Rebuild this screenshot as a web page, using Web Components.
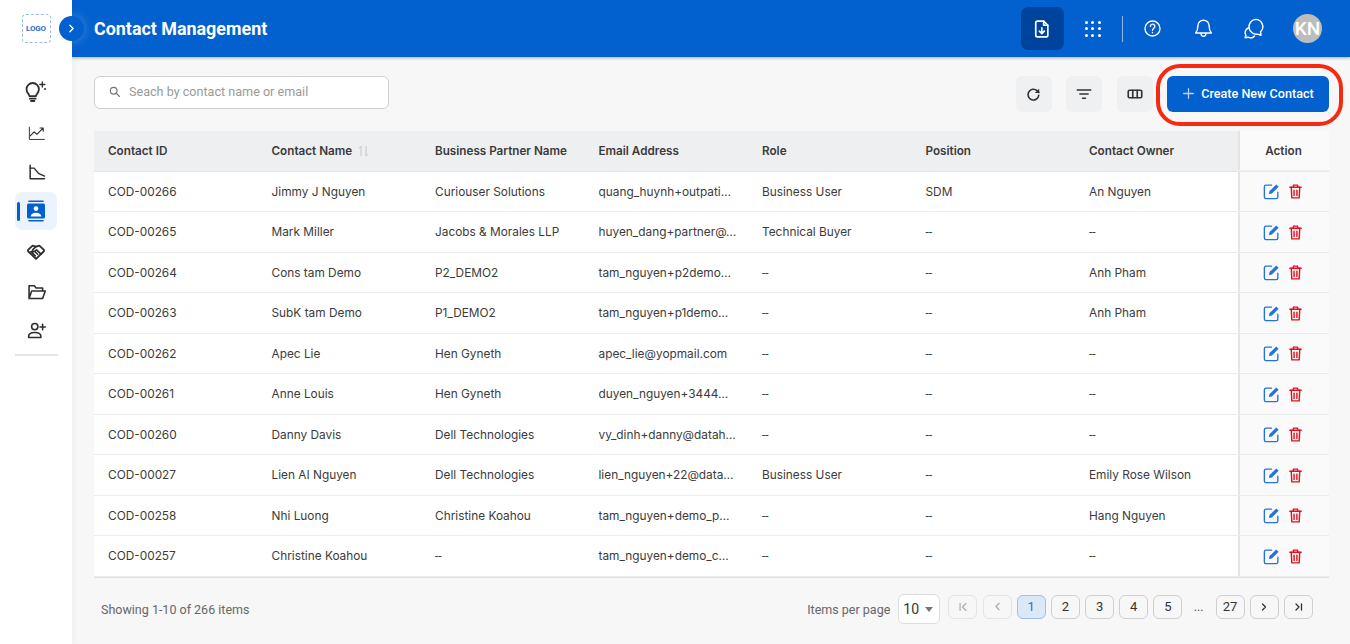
<!DOCTYPE html>
<html lang="en"><head><meta charset="utf-8"><title>Contact Management</title>
<style>
html,body{margin:0;padding:0;height:100%;background:#f7f7f7;overflow:hidden}
body{font-family:"Inter","Liberation Sans",sans-serif}
</style></head><body>
<app-shell></app-shell>
<script>
const I={
 bulb:'<path d="M5.5 17.2c0-1.8-3-3.3-3-7a6.2 6.2 0 0 1 12.4 0c0 3.7-3 5.2-3 7z"/><path d="M5.8 19.7h5.8M7 22h3.4"/><path d="M18.3 3v5M15.8 5.5h5" stroke-width="1.3"/><circle cx="21" cy="10" r="1" fill="currentColor" stroke="none"/>',
 trend:'<path d="M3 4v15.5h19" stroke-width="1.2"/><path d="M4 15l5-5 3.5 3 7.5-7.5M16.5 5h4v4" stroke-width="1.4"/>',
 chart:'<path d="M4 3v17h18" stroke-width="1.9"/><path d="M4 6.5h5l5.5 6.5 7.5 3.5" stroke-width="1.7"/>',
 deal:'<path d="M12 21.5 2.8 12.6a1.6 1.6 0 0 1 0-2.3L8 5.5l4 1.2 4-1.2 5.2 4.8a1.6 1.6 0 0 1 0 2.3z" stroke-width="2.2"/><path d="M12 6.7 8.2 10.4a1.5 1.5 0 0 0 2.1 2.1l2.4-1.9 5.3 5.1M8 14.8l3 3M10.6 12.6l3.4 3.3M6 12.8l3.5 3.5" stroke-width="2"/>',
 folder:'<path d="M3.5 20V5.5h6l2 2.5h7.5v3.5M3.5 20h15.5l3-8.5H6.5z" stroke-width="1.8"/>',
 addUser:'<circle cx="10" cy="7.5" r="3.6" stroke-width="1.8"/><path d="M3 20v-1.5c0-2.7 3-4.3 7-4.3s7 1.6 7 4.3V20z" stroke-width="1.8"/><path d="M19 5v6M16 8h6" stroke-width="1.8"/>',
 search:'<circle cx="10.5" cy="10.5" r="6.2" stroke-width="2.2"/><path d="m15 15 6 6" stroke-width="2.6"/>',
 refresh:'<path d="M19.4 13.2A7.6 7.6 0 1 1 17 6.6l2.6 2.4" stroke-width="2.3"/><path d="M20 3.8V10h-6.2z" fill="currentColor" stroke="none"/>',
 filter:'<path d="M3 6.5h18M6.5 12h11M10 17.5h4" stroke-width="2"/>',
 cols:'<rect x="3" y="7" width="18" height="10" rx="1.6" stroke-width="2.2"/><path d="M9 7v10M15 7v10" stroke-width="2.2"/>',
 fileDown:'<path d="M6.5 2.5H14l5 5v12a2 2 0 0 1-2 2H6.5a2 2 0 0 1-2-2v-15a2 2 0 0 1 2-2z" stroke-width="2"/><path d="M14 2.5v5h5" stroke-width="2"/><path d="M11.8 10.5v7M8.8 14.6l3 3 3-3" stroke-width="2"/>',
 help:'<circle cx="12" cy="12" r="9.5" stroke-width="1.7"/><path d="M9.3 9.4a2.8 2.8 0 1 1 4.3 2.3c-1 .7-1.6 1.2-1.6 2.5" stroke-width="1.7"/><circle cx="12" cy="17.2" r="1" fill="currentColor" stroke="none"/>',
 bell:'<path d="M12 2.5a6.4 6.4 0 0 0-6.4 6.4c0 5.2-1.1 6.6-2.6 8.3h18c-1.5-1.7-2.6-3.1-2.6-8.3A6.4 6.4 0 0 0 12 2.5z" stroke-width="1.6"/><path d="M9.3 17.4a2.8 2.8 0 1 0 5.4 0" stroke-width="1.6"/>',
 chat:'<path d="M14 2.5a7.6 7.6 0 0 1 5.4 13l.4 3.6-3.6-1.2a7.6 7.6 0 1 1-2.2-15.4z" stroke-width="1.5"/><path d="M6.6 11.5a5.2 5.2 0 0 0-2.5 7.6l-.8 2.5 3-.5c2.4 1.2 5 .8 6.7-1.3" stroke-width="1.5"/>',
 edit:'<path d="M20 13v6a2 2 0 0 1-2 2H5a2 2 0 0 1-2-2V6a2 2 0 0 1 2-2h7" stroke-width="1.7"/><path d="M9.5 11.5 18 3l3 3-8.5 8.5-3.8.8z" fill="currentColor" stroke="none"/>',
 trash:'<path d="M4 6h16M9 6V3h6v3" stroke-width="2"/><path d="M6 6l.8 15h10.4L18 6" stroke-width="2"/><path d="M10 10v7.5M14 10v7.5" stroke-width="2"/>',
 first:'<path d="M7 6v12" stroke-width="2"/><path d="m17 6-6 6 6 6" stroke-width="2"/>',
 prev:'<path d="m15 6-6 6 6 6" stroke-width="2"/>',
 next:'<path d="m9 6 6 6-6 6" stroke-width="2.6"/>',
 last:'<path d="m6 6 6 6-6 6" stroke-width="2.6"/><path d="M17 6v12" stroke-width="2.6"/>'
};
class UiIcon extends HTMLElement{
 connectedCallback(){
  const s=this.getAttribute('size')||20,n=this.getAttribute('name');
  this.attachShadow({mode:'open'}).innerHTML=`<style>:host{display:inline-flex;width:${s}px;height:${s}px;flex:none}svg{width:100%;height:100%;display:block}</style><svg viewBox="0 0 24 24" fill="none" stroke="currentColor" stroke-width="1.8" stroke-linecap="round" stroke-linejoin="round" aria-hidden="true">${I[n]||''}</svg>`;
 }
}
customElements.define('ui-icon',UiIcon);

class SideNav extends HTMLElement{
 connectedCallback(){
  const item=(n,s,h)=>`<div class="item" style="height:${h}px"><ui-icon name="${n}" size="${s}"></ui-icon></div>`;
  this.attachShadow({mode:'open'}).innerHTML=`<style>
  :host{display:flex;flex-direction:column;align-items:center;width:72px;flex:none;background:#fff;box-shadow:0 0 8px rgba(0,0,0,.06);position:relative;z-index:2;height:644px;box-sizing:border-box;padding-top:14px}
  .logo{width:27px;height:27px;border:1px dashed #9db9ef;border-radius:4px;display:flex;align-items:center;justify-content:center;color:#2f69c9;font:700 8px "Roboto",sans-serif;letter-spacing:-.2px}
  nav{margin-top:28px;display:flex;flex-direction:column;width:42px;align-items:center}
  .item{width:42px;display:flex;align-items:center;justify-content:center;color:#2e2e2e;position:relative;box-sizing:border-box}
  .active{background:#edf3fc;border-radius:7px;color:#0360cf;height:38px;margin-top:3px;width:42px}
  .active::before{content:"";position:absolute;left:2px;top:10px;width:3px;height:19px;border-radius:2px;background:#0360cf}
  .rule{width:43px;height:2px;background:#e6e6e6;margin-top:4px}
  .toggle{position:absolute;left:58.5px;top:15.5px;width:25px;height:25px;border-radius:50%;background:#0360cf;color:#fff;display:flex;align-items:center;justify-content:center;box-shadow:0 0 12px rgba(255,255,255,.25)}
  </style>
  <div class="logo">LOGO</div>
  <span class="toggle"><ui-icon name="next" size="13"></ui-icon></span>
  <nav>
   ${item('bulb',24,40)}${item('trend',19,44)}${item('chart',19,34)}
   <div class="item active"><svg width="22" height="24" viewBox="0 0 22 24" aria-hidden="true"><path d="M4 2.2h14M4 21.8h14" stroke="currentColor" stroke-width="1.6" stroke-linecap="round"/><rect x="2" y="4.5" width="18" height="15" rx="1.6" fill="currentColor"/><circle cx="11" cy="9.6" r="2.3" fill="#fff"/><path d="M5.8 17.4c0-2.4 2.3-3.7 5.2-3.7s5.2 1.3 5.2 3.7z" fill="#fff"/></svg></div>
   ${item('deal',20,42)}${item('folder',21,38)}${item('addUser',21,40)}
  </nav>
  <div class="rule"></div>`;
 }
}
customElements.define('side-nav',SideNav);

class TopBar extends HTMLElement{
 connectedCallback(){
  this.attachShadow({mode:'open'}).innerHTML=`<style>
  :host{display:flex;align-items:center;height:57px;flex:none;background:#0360cf;color:#fff;box-shadow:0 1px 3px rgba(0,0,0,.3);padding:0 28px 0 22px;box-sizing:border-box;position:relative;z-index:1}
  h1{font:700 17.9px "Roboto",sans-serif;margin:0;flex:1}
  .dl{width:43px;height:43px;border-radius:7px;background:#00439c;display:flex;align-items:center;justify-content:center}
  .dots{width:16px;height:16px;margin-left:21px;display:grid;grid-template-columns:repeat(3,3px);grid-auto-rows:3px;gap:3.5px}
  .dots i{background:#fff;border-radius:50%}
  .sep{width:1px;height:26px;background:rgba(255,255,255,.55);margin:0 20px 0 21px}
  .ic{display:flex}
  .av{width:29px;height:29px;border-radius:50%;background:#bdbdbd;color:#fff;font:500 19px "Roboto",sans-serif;display:flex;align-items:center;justify-content:center;margin-left:28.5px}
  </style>
  <h1>Contact Management</h1>
  <div class="dl"><ui-icon name="fileDown" size="20"></ui-icon></div>
  <div class="dots">${'<i></i>'.repeat(9)}</div>
  <div class="sep"></div>
  <span class="ic"><ui-icon name="help" size="19"></ui-icon></span>
  <span class="ic" style="margin-left:31px"><ui-icon name="bell" size="21"></ui-icon></span>
  <span class="ic" style="margin-left:28px"><ui-icon name="chat" size="23"></ui-icon></span>
  <div class="av">KN</div>`;
 }
}
customElements.define('top-bar',TopBar);

class ToolBar extends HTMLElement{
 connectedCallback(){
  this.attachShadow({mode:'open'}).innerHTML=`<style>
  :host{display:flex;align-items:flex-start;height:36px;position:relative;flex:none}
  .search{width:295px;height:33px;box-sizing:border-box;background:#fff;border:1px solid #cfcfcf;border-radius:6px;display:flex;align-items:center;padding:0 0 2px 13px;gap:8px;color:#777;font:12.6px "Roboto",sans-serif}
  .search span{color:#9a9a9a}
  .sp{flex:1}
  .b{width:36px;height:36px;border-radius:6px;background:#eff0f2;color:#333;display:flex;align-items:center;justify-content:center;margin-right:14.5px}
  .cta{width:162px;height:36px;border-radius:6px;background:#0360cf;color:#fff;font:500 12.6px "Roboto",sans-serif;display:flex;align-items:center;justify-content:center;gap:7px;box-sizing:border-box;margin-left:-.5px;margin-right:.5px;padding:0 0 1px 2px}
  .cta svg{display:block}
  .ring{position:absolute;right:-13.5px;top:-12.5px;width:186.5px;height:62px;box-sizing:border-box;border:4.5px solid #f52a12;border-radius:24px;pointer-events:none}
  </style>
  <div class="search"><ui-icon name="search" size="13"></ui-icon><span>Seach by contact name or email</span></div>
  <div class="sp"></div>
  <div class="b"><ui-icon name="refresh" size="17"></ui-icon></div>
  <div class="b"><ui-icon name="filter" size="18"></ui-icon></div>
  <div class="b"><ui-icon name="cols" size="18"></ui-icon></div>
  <div class="cta"><svg width="11" height="11" viewBox="0 0 11 11"><path d="M5.5 .7v9.6M.7 5.5h9.6" stroke="#b9d3f3" stroke-width="1.3" stroke-linecap="round"/></svg><span>Create New Contact</span></div>
  <div class="ring"></div>`;
 }
}
customElements.define('tool-bar',ToolBar);

const COLS='repeat(7,163.5px) 1fr';
class TableRow extends HTMLElement{
 connectedCallback(){
  const cells=JSON.parse(this.getAttribute('cells'));
  this.attachShadow({mode:'open'}).innerHTML=`<style>
  :host{display:grid;grid-template-columns:${COLS};height:40.5px;box-sizing:border-box;border-bottom:1px solid #ececec;background:#fff;font:11.85px "Inter",sans-serif;color:#3b3b3b}
  div{padding-left:14px;display:flex;align-items:center;white-space:nowrap;overflow:hidden}
  .dash{font-family:"Roboto",sans-serif;font-size:12px}
  .a{background:#fafafa;border-left:2px solid #e4e4e4;padding:0 3px 0 0;justify-content:center;gap:6px;margin-left:-.5px}
  .e{color:#2273dc}.t{color:#e0101e}
  </style>${cells.map(c=>`<div${c==='--'?' class="dash"':''}>${c}</div>`).join('')}<div class="a"><ui-icon class="e" name="edit" size="19"></ui-icon><ui-icon class="t" name="trash" size="17"></ui-icon></div>`;
 }
}
customElements.define('table-row',TableRow);

class TableHead extends HTMLElement{
 connectedCallback(){
  const h=['Contact ID','Contact Name','Business Partner Name','Email Address','Role','Position','Contact Owner'];
  this.attachShadow({mode:'open'}).innerHTML=`<style>
  :host{display:grid;grid-template-columns:${COLS};height:40.95px;background:#eeeff1;font:600 11.7px "Inter",sans-serif;color:#3a3a3a;box-sizing:border-box;border-bottom:1px solid #e6e6e6;padding-bottom:.5px}
  div{padding-left:14px;display:flex;align-items:center;white-space:nowrap;gap:6px}
  .a{background:#fafafa;border-left:2px solid #e4e4e4;padding:0 2px 0 0;justify-content:center;margin-left:-.5px}
  svg{display:block}
  </style>${h.map((t,i)=>`<div>${t}${i==1?'<svg width="11" height="12" viewBox="0 0 11 12" fill="none" stroke="#c4c6c9" stroke-width="1"><path d="M3 11V1.2L1 3.2"/><path d="M8 1v9.8l2-2"/></svg>':''}</div>`).join('')}<div class="a">Action</div>`;
 }
}
customElements.define('table-head',TableHead);

class DataTable extends HTMLElement{
 connectedCallback(){
  const d=[
  ['COD-00266','Jimmy J Nguyen','Curiouser Solutions','quang_huynh+outpati…','Business User','SDM','An Nguyen'],
  ['COD-00265','Mark Miller','Jacobs &amp; Morales LLP','huyen_dang+partner@…','Technical Buyer','--','--'],
  ['COD-00264','Cons tam Demo','P2_DEMO2','tam_nguyen+p2demo…','--','--','Anh Pham'],
  ['COD-00263','SubK tam Demo','P1_DEMO2','tam_nguyen+p1demo…','--','--','Anh Pham'],
  ['COD-00262','Apec Lie','Hen Gyneth','apec_lie@yopmail.com','--','--','--'],
  ['COD-00261','Anne Louis','Hen Gyneth','duyen_nguyen+3444…','--','--','--'],
  ['COD-00260','Danny Davis','Dell Technologies','vy_dinh+danny@datah…','--','--','--'],
  ['COD-00027','Lien AI Nguyen','Dell Technologies','lien_nguyen+22@data…','Business User','--','Emily Rose Wilson'],
  ['COD-00258','Nhi Luong','Christine Koahou','tam_nguyen+demo_p…','--','--','Hang Nguyen'],
  ['COD-00257','Christine Koahou','--','tam_nguyen+demo_c…','--','--','--']];
  const r=this.attachShadow({mode:'open'});
  r.innerHTML=`<style>:host{display:block;margin-top:19px;flex:none;border-bottom:1px solid #e0e0e0}</style><table-head></table-head>`;
  d.forEach(c=>{const e=document.createElement('table-row');e.setAttribute('cells',JSON.stringify(c));r.appendChild(e);});
 }
}
customElements.define('data-table',DataTable);

class PagerBar extends HTMLElement{
 connectedCallback(){
  const b=(c,cls='')=>`<span class="p ${cls}">${c}</span>`;
  this.attachShadow({mode:'open'}).innerHTML=`<style>
  :host{display:flex;align-items:center;height:64px;padding:0 16px 1px 7px;box-sizing:border-box;font:12.5px "Roboto",sans-serif;color:#666;flex:none}
  .sp{flex:1}
  .sel{width:42px;height:30px;box-sizing:border-box;background:#fff;border:1px solid #ddd;border-radius:6px;margin:0 8px;display:flex;align-items:center;padding-left:4px;gap:6px;color:#333;font-size:14px}
  .sel i{width:0;height:0;border:4px solid transparent;border-top:5px solid #777;border-bottom:0}
  .p{width:29px;height:24px;box-sizing:border-box;border:1px solid #cfcfcf;border-radius:6px;display:flex;align-items:center;justify-content:center;color:#333;margin-right:5.2px;font-size:13px;margin-top:-5px}
  .off{border-color:#e4e4e4;color:#aaa}
  .on{background:#dde8f7;border-color:#9cc0ef;color:#2273dc}
  .dd{width:28px;box-sizing:border-box;padding-left:6px;color:#555;margin-top:-5px}
  .last{margin-right:0}
  </style>
  <span>Showing 1-10 of 266 items</span><span class="sp"></span>
  <span>Items per page</span>
  <span class="sel">10<i></i></span>
  ${b('<ui-icon name="first" size="14"></ui-icon>','off')}${b('<ui-icon name="prev" size="13"></ui-icon>','off')}
  ${b('1','on')}${b('2')}${b('3')}${b('4')}${b('5')}
  <span class="dd">...</span>${b('27')}
  ${b('<ui-icon name="next" size="12"></ui-icon>')}${b('<ui-icon name="last" size="12"></ui-icon>','last')}`;
 }
}
customElements.define('pager-bar',PagerBar);

class AppShell extends HTMLElement{
 connectedCallback(){
  this.attachShadow({mode:'open'}).innerHTML=`<style>
  :host{display:flex;width:1350px;height:644px;overflow:hidden;background:#f7f7f7}
  main{flex:1;display:flex;flex-direction:column;min-width:0}
  .body{padding:19px 21px 0 22px;display:flex;flex-direction:column}
  </style><side-nav></side-nav><main><top-bar></top-bar><div class="body"><tool-bar></tool-bar><data-table></data-table><pager-bar></pager-bar></div></main>`;
 }
}
customElements.define('app-shell',AppShell);
</script>
</body></html>
